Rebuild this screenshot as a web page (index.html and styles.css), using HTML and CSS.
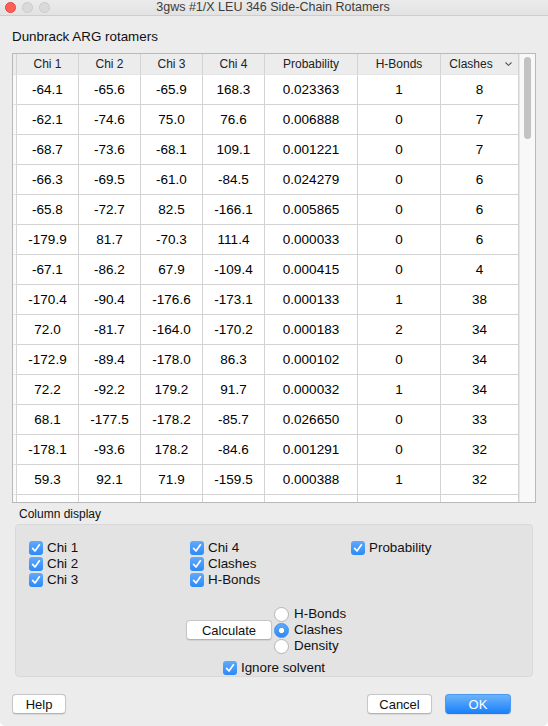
FILE: index.html
```html
<!DOCTYPE html>
<html lang="en">
<head>
  <meta charset="UTF-8">
  <meta name="viewport" content="width=device-width, initial-scale=1.0">
  <title>3gws #1/X LEU 346 Side-Chain Rotamers</title>
  <link rel="stylesheet" href="styles.css">
</head>
<body>

<div id="window">
  <div id="titlebar">
    <div class="lights">
      <span class="light close"></span>
      <span class="light"></span>
      <span class="light"></span>
    </div>
    <div class="title">3gws #1/X LEU 346 Side-Chain Rotamers</div>
  </div>

  <div id="content">
    <div class="heading">Dunbrack ARG rotamers</div>

    <div id="table-frame">
      <div class="table-scroll">
        <table id="rotamers">
          <thead>
            <tr>
              <th class="gutter"></th>
              <th class="c-chi">Chi 1</th>
              <th class="c-chi">Chi 2</th>
              <th class="c-chi">Chi 3</th>
              <th class="c-chi">Chi 4</th>
              <th class="c-prob">Probability</th>
              <th class="c-hb">H-Bonds</th>
              <th class="c-clash"><span class="sorted">Clashes<svg width="7" height="4" viewBox="0 0 7 4"><path d="M0.5 0.5 L3.5 3.3 L6.5 0.5" fill="none" stroke="#555" stroke-width="1.1"/></svg></span></th>
            </tr>
          </thead>
          <tbody>
            <tr><td class="gutter"></td><td>-64.1</td><td>-65.6</td><td>-65.9</td><td>168.3</td><td>0.023363</td><td>1</td><td>8</td></tr>
            <tr><td class="gutter"></td><td>-62.1</td><td>-74.6</td><td>75.0</td><td>76.6</td><td>0.006888</td><td>0</td><td>7</td></tr>
            <tr><td class="gutter"></td><td>-68.7</td><td>-73.6</td><td>-68.1</td><td>109.1</td><td>0.001221</td><td>0</td><td>7</td></tr>
            <tr><td class="gutter"></td><td>-66.3</td><td>-69.5</td><td>-61.0</td><td>-84.5</td><td>0.024279</td><td>0</td><td>6</td></tr>
            <tr><td class="gutter"></td><td>-65.8</td><td>-72.7</td><td>82.5</td><td>-166.1</td><td>0.005865</td><td>0</td><td>6</td></tr>
            <tr><td class="gutter"></td><td>-179.9</td><td>81.7</td><td>-70.3</td><td>111.4</td><td>0.000033</td><td>0</td><td>6</td></tr>
            <tr><td class="gutter"></td><td>-67.1</td><td>-86.2</td><td>67.9</td><td>-109.4</td><td>0.000415</td><td>0</td><td>4</td></tr>
            <tr><td class="gutter"></td><td>-170.4</td><td>-90.4</td><td>-176.6</td><td>-173.1</td><td>0.000133</td><td>1</td><td>38</td></tr>
            <tr><td class="gutter"></td><td>72.0</td><td>-81.7</td><td>-164.0</td><td>-170.2</td><td>0.000183</td><td>2</td><td>34</td></tr>
            <tr><td class="gutter"></td><td>-172.9</td><td>-89.4</td><td>-178.0</td><td>86.3</td><td>0.000102</td><td>0</td><td>34</td></tr>
            <tr><td class="gutter"></td><td>72.2</td><td>-92.2</td><td>179.2</td><td>91.7</td><td>0.000032</td><td>1</td><td>34</td></tr>
            <tr><td class="gutter"></td><td>68.1</td><td>-177.5</td><td>-178.2</td><td>-85.7</td><td>0.026650</td><td>0</td><td>33</td></tr>
            <tr><td class="gutter"></td><td>-178.1</td><td>-93.6</td><td>178.2</td><td>-84.6</td><td>0.001291</td><td>0</td><td>32</td></tr>
            <tr><td class="gutter"></td><td>59.3</td><td>92.1</td><td>71.9</td><td>-159.5</td><td>0.000388</td><td>1</td><td>32</td></tr>
            <tr><td class="gutter"></td><td>&nbsp;</td><td>&nbsp;</td><td>&nbsp;</td><td>&nbsp;</td><td>&nbsp;</td><td>&nbsp;</td><td>&nbsp;</td></tr>
          </tbody>
        </table>
      </div>
      <div class="scrollbar"><div class="thumb"></div></div>
    </div>

    <div class="group-label">Column display</div>
    <div id="column-display">
      <div class="check-grid">
        <label class="opt"><span class="check"><svg width="14" height="14" viewBox="0 0 14 14"><path d="M3.6 7.4 L6 10 L10.4 3.8" fill="none" stroke="#fff" stroke-width="1.7" stroke-linecap="round" stroke-linejoin="round"/></svg></span>Chi 1</label>
        <label class="opt"><span class="check"><svg width="14" height="14" viewBox="0 0 14 14"><path d="M3.6 7.4 L6 10 L10.4 3.8" fill="none" stroke="#fff" stroke-width="1.7" stroke-linecap="round" stroke-linejoin="round"/></svg></span>Chi 4</label>
        <label class="opt"><span class="check"><svg width="14" height="14" viewBox="0 0 14 14"><path d="M3.6 7.4 L6 10 L10.4 3.8" fill="none" stroke="#fff" stroke-width="1.7" stroke-linecap="round" stroke-linejoin="round"/></svg></span>Probability</label>
        <label class="opt"><span class="check"><svg width="14" height="14" viewBox="0 0 14 14"><path d="M3.6 7.4 L6 10 L10.4 3.8" fill="none" stroke="#fff" stroke-width="1.7" stroke-linecap="round" stroke-linejoin="round"/></svg></span>Chi 2</label>
        <label class="opt"><span class="check"><svg width="14" height="14" viewBox="0 0 14 14"><path d="M3.6 7.4 L6 10 L10.4 3.8" fill="none" stroke="#fff" stroke-width="1.7" stroke-linecap="round" stroke-linejoin="round"/></svg></span>Clashes</label>
        <span></span>
        <label class="opt"><span class="check"><svg width="14" height="14" viewBox="0 0 14 14"><path d="M3.6 7.4 L6 10 L10.4 3.8" fill="none" stroke="#fff" stroke-width="1.7" stroke-linecap="round" stroke-linejoin="round"/></svg></span>Chi 3</label>
        <label class="opt"><span class="check"><svg width="14" height="14" viewBox="0 0 14 14"><path d="M3.6 7.4 L6 10 L10.4 3.8" fill="none" stroke="#fff" stroke-width="1.7" stroke-linecap="round" stroke-linejoin="round"/></svg></span>H-Bonds</label>
        <span></span>
      </div>

      <div class="calc-row">
        <button class="btn calc">Calculate</button>
        <div class="radios">
          <label class="opt"><span class="radio"></span>H-Bonds</label>
          <label class="opt"><span class="radio on"></span>Clashes</label>
          <label class="opt"><span class="radio"></span>Density</label>
        </div>
      </div>

      <div class="solvent-row">
        <label class="opt"><span class="check"><svg width="14" height="14" viewBox="0 0 14 14"><path d="M3.6 7.4 L6 10 L10.4 3.8" fill="none" stroke="#fff" stroke-width="1.7" stroke-linecap="round" stroke-linejoin="round"/></svg></span>Ignore solvent</label>
      </div>
    </div>

    <div class="button-row">
      <button class="btn help">Help</button>
      <div class="spacer"></div>
      <button class="btn cancel">Cancel</button>
      <button class="btn ok">OK</button>
    </div>
  </div>
</div>

</body>
</html>
```

FILE: styles.css
```css
html {
  background-color: #fff;
}

body {
  font-family: "Liberation Sans", Arial, sans-serif;
  font-size: 13px;
  color: #111;
  margin: 0;
  padding: 0;
}

#window {
  width: 548px;
  height: 726px;
  background-color: #ececec;
  border-bottom-left-radius: 5px;
  border-bottom-right-radius: 5px;
  overflow: hidden;
  display: flex;
  flex-direction: column;
}

/* title bar */

#titlebar {
  height: 15px;
  flex: none;
  display: flex;
  align-items: center;
  background: linear-gradient(#ebebeb, #e2e2e2);
  border-bottom: 1px solid #cdcdcd;
}

.lights {
  display: flex;
  gap: 6px;
  padding-left: 5px;
}

.light {
  width: 11px;
  height: 11px;
  border-radius: 50%;
  background-color: #dadada;
  border: 1px solid #cbcbcb;
  box-sizing: border-box;
}

.light.close {
  background-color: #fc5f57;
  border-color: #e2463f;
}

.title {
  flex: 1;
  text-align: center;
  margin-right: 52px;
  font-size: 12.5px;
  color: #3c3c3c;
  line-height: 15px;
}

#content {
  padding: 0 12px;
  display: flex;
  flex-direction: column;
}

.heading {
  margin-top: 13px;
  line-height: 16px;
  height: 16px;
  margin-bottom: 8px;
  font-size: 13.4px;
}

/* table */

#table-frame {
  height: 448px;
  border: 1px solid #b9b9b9;
  background-color: #fff;
  display: flex;
  overflow: hidden;
}

.table-scroll {
  width: 506px;
  overflow: hidden;
}

#rotamers {
  table-layout: fixed;
  border-collapse: separate;
  border-spacing: 0;
  width: 506px;
}

#rotamers th,
#rotamers td {
  box-sizing: border-box;
  border-right: 1px solid #d3d3d3;
  border-bottom: 1px solid #d3d3d3;
  text-align: center;
  padding: 0;
  white-space: nowrap;
}

#rotamers th {
  height: 21px;
  font-weight: normal;
  font-size: 12px;
  color: #222;
  background-color: #ececec;
  border-bottom-color: #e4e4e4;
}

#rotamers td {
  height: 30px;
  font-size: 13.5px;
  color: #000;
}

#rotamers .gutter {
  width: 4px;
  background-color: #fafafa;
  border-bottom-color: #e2e2e2;
}

#rotamers th.gutter {
  background-color: #ececec;
}

.c-chi { width: 62px; }
.c-prob { width: 93px; }
.c-hb { width: 83px; }
.c-clash { width: 78px; }

.sorted {
  display: inline-flex;
  align-items: center;
  gap: 12px;
  margin-left: 2px;
}

.scrollbar {
  width: 16px;
  flex: none;
  background-color: #f8f8f8;
  border-left: 1px solid #e6e6e6;
  box-sizing: border-box;
  padding: 3px 0 0 4px;
}

.thumb {
  width: 7px;
  height: 82px;
  border-radius: 4px;
  background-color: #c2c2c2;
}

/* column display group */

.group-label {
  font-size: 12px;
  line-height: 15px;
  margin: 4px 0 2px 7px;
}

#column-display {
  margin: 0 3px;
  height: 153px;
  box-sizing: border-box;
  background-color: #e3e3e3;
  border: 1px solid #d9d9d9;
  border-radius: 4px;
  padding: 15px 0 0 13px;
  display: flex;
  flex-direction: column;
}

.check-grid {
  display: grid;
  grid-template-columns: 161px 161px 161px;
  grid-auto-rows: 16px;
}

.opt {
  display: flex;
  align-items: center;
  gap: 4px;
  line-height: 16px;
  height: 16px;
  font-size: 13.4px;
  color: #111;
}

.check {
  width: 14px;
  height: 14px;
  border-radius: 3px;
  background: linear-gradient(#62aafc, #2b8af8);
  display: flex;
  flex: none;
}

.calc-row {
  display: flex;
  align-items: center;
  margin-top: 18px;
  margin-left: 157px;
}

.radios {
  display: flex;
  flex-direction: column;
  margin-left: 2px;
}

.radios .opt {
  gap: 5px;
}

.radio {
  width: 15px;
  height: 15px;
  border-radius: 50%;
  box-sizing: border-box;
  background-color: #fff;
  border: 1px solid #b4b4b4;
  flex: none;
}

.radio.on {
  background: radial-gradient(circle, #fff 0 2.4px, transparent 2.9px), linear-gradient(#62aafc, #2b8af8);
  border-color: #3a8ff6;
}

.solvent-row {
  display: flex;
  justify-content: center;
  margin-top: 6px;
  margin-right: 13px;
}

/* buttons */

.btn {
  font-family: "Liberation Sans", Arial, sans-serif;
  font-size: 13px;
  color: #111;
  height: 20px;
  padding: 0;
  background-color: #fff;
  border: 1px solid #c6c6c6;
  border-bottom-color: #b2b2b2;
  border-radius: 4px;
  box-shadow: 0 0.5px 1px rgba(0, 0, 0, 0.08);
}

.calc {
  width: 86px;
}

.button-row {
  display: flex;
  margin-top: 17px;
  padding-right: 25px;
}

.spacer {
  flex: 1;
}

.help {
  width: 54px;
}

.cancel {
  width: 65px;
  margin-right: 13px;
}

.ok {
  width: 66px;
  color: #fff;
  background: linear-gradient(#6cb3fa, #1a82fb);
  border-color: #4a9af5;
  border-bottom-color: #2a78e8;
}
```
